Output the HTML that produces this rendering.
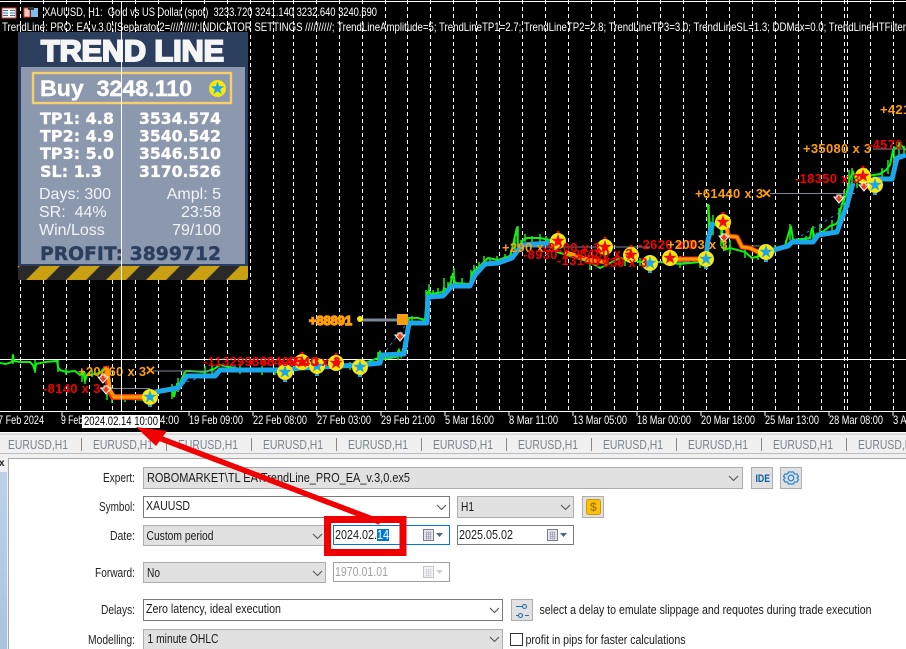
<!DOCTYPE html>
<html><head><meta charset="utf-8"><title>Trend Line</title>
<style>
html,body{margin:0;padding:0;background:#000;width:906px;height:649px;overflow:hidden}
svg{display:block}
text{font-family:"Liberation Sans",sans-serif;white-space:pre}
.hd{font-size:12px;fill:#fff}
.ax{font-size:12px;fill:#fff}
.tab{font-size:12.500px;fill:#77838f}
.ui{font-size:12.500px;fill:#1a1a1a}
.lb{font-size:12.500px;fill:#222}
.or{font-size:13px;font-weight:bold;fill:#ff9f0a;letter-spacing:.3px}
.rd{font-size:13px;font-weight:bold;fill:#f40000;letter-spacing:.3px}
.p1{font-family:"DejaVu Sans",sans-serif;font-weight:bold;font-size:16px;fill:#fff;stroke:#fff;stroke-width:.3}
.p2{font-size:16px;fill:#f2f4f8}
</style></head><body>
<svg width="906" height="649" viewBox="0 0 906 649" xmlns="http://www.w3.org/2000/svg">
<defs>
<polygon id="st" points="0,-7 1.65,-2.27 6.66,-2.16 2.66,.87 4.11,5.66 0,2.8 -4.11,5.66 -2.66,.87 -6.66,-2.16 -1.65,-2.27"/>
<g id="bs"><circle r="8" fill="#f6e80c"/><rect x="-2" y="8" width="4" height="2" fill="#1ca7ec"/><use href="#st" fill="#1ca7ec"/></g>
<g id="rs"><rect x="-1.500" y="-10" width="3" height="3" fill="#f00"/><circle r="8" fill="#f6e80c"/><use href="#st" fill="#f00b0b"/></g>
<polygon id="da" points="-5,-3 -2,-3 -2,-5 2,-5 2,-3 5,-3 0,3" fill="#e8401c" stroke="#fff" stroke-width="1"/>
<pattern id="hz" width="40" height="14" patternUnits="userSpaceOnUse" x="6" y="266"><rect width="40" height="14" fill="#c9a012"/><polygon points="0,14 14,0 34,0 20,14" fill="#2a2a2a"/></pattern>
<g id="cal"><rect x="0" y="0" width="10" height="11" fill="#e8e8ee" stroke="#767c88"/><path d="M2 3h6M2 5h6M2 7h6M2 9h6M3 2v8M5 2v8M7 2v8" stroke="#a0a4b0" stroke-width=".8"/></g>
<path id="chev" d="M0 0l4.500 4.500L9 0" fill="none" stroke="#555" stroke-width="1.100"/>
<linearGradient id="lg" x1="0" y1="0" x2="0" y2="1"><stop offset="0" stop-color="#bcd2ea"/><stop offset="1" stop-color="#a9c4e0"/></linearGradient>
</defs>

<!-- chart -->
<rect width="906" height="432" fill="#000"/>
<path d="M20.500 0V411M43.500 0V411M66.500 0V411M89.500 0V411M112.500 0V411M135.500 0V411M158.500 0V411M181.500 0V411M204.500 0V411M227.500 0V411M250.500 0V411M273.500 0V411M293.500 0V411M316.500 0V411M339.500 0V411M362.500 0V411M385.500 0V411M407.500 0V411M430.500 0V411M453.500 0V411M476.500 0V411M499.500 0V411M522.500 0V411M545.500 0V411M568.500 0V411M591.500 0V411M614.500 0V411M637.500 0V411M660.500 0V411M683.500 0V411M706.500 0V411M729.500 0V411M752.500 0V411M775.500 0V411M798.500 0V411M821.500 0V411M844.500 0V411M847.500 0V411M870.500 0V411M893.500 0V411" stroke="#fff" stroke-width="1" stroke-dasharray="4 3"/>
<rect y="1" width="906" height="1" fill="#fff"/>
<rect y="359" width="906" height="1" fill="#fff"/>

<!-- green price -->
<polyline fill="none" stroke="#12f010" stroke-width="2" points="0,363 6,364 12,362 13,355 14,361 20,362 30,362 33,365 35,371 36,364 45,362 57,361 58,367 60,370 66,372 75,371 80,375 83,372 85,381 87,375 95,374 100,373 104,368 107,378 110,393 113,399 130,399 150,400 160,392 172,388 174,397 177,384 180,383 183,376 186,371 190,371 205,372 214,369 220,365 230,367 250,371 265,369 280,373 300,366 330,367 360,365 378,358 380,352 384,359 396,357 399,350 401,356 404,346 407,330 409,318 418,318 425,320 427,293 429,291 431,294 443,292 444,288 447,290 451,282 453,273 455,283 470,284 472,273 475,270 480,266 484,262 488,258 498,260 510,256 513,245 517,227 518,250 523,240 527,238 540,238 550,240 557,252 570,256 590,262 600,268 620,258 640,262 660,262 680,264 700,262 706,260 709,230 708,204 710,228 714,224 722,230 724,250 730,248 745,252 752,258 760,256 770,252 780,248 785,246 789,232 791,226 793,240 810,238 812,228 815,238 830,226 836,224 838,222 840,212 843,200 846,196 850,178 853,172 856,180 862,172 868,176 880,174 886,170 890,165 893,150 896,148 900,144 906,150"/>
<path fill="none" stroke="#12f010" stroke-width="1.500" d="M13 354v10M35 360v13M58 360v12M66 368v7M82 370v12M85 372v12M92 370v7M107 375v25M112 395v8M125 396v6M172 384v15M178 378v14M184 372v12M205 366v10M212 364v10M240 364v10M262 366v9M275 368v7M350 362v8M378 352v10M398 350v10M404 342v14M412 316v8M426 290v32M429 284v20M433 290v6M438 288v8M444 278v16M448 282v8M451 276v12M454 268v18M462 278v6M471 270v14M474 265v12M479 262v10M484 256v10M490 258v8M497 256v8M505 254v8M511 250v10M515 238v16M518 226v22M521 240v8M525 234v8M532 236v7M540 234v8M546 236v7M590 258v12M605 254v12M625 256v10M640 258v8M680 256v12M700 256v12M709 205v35M713 215v20M721 226v20M730 240v14M745 246v12M758 250v10M775 245v8M786 240v8M790 224v16M806 236v6M813 226v14M820 224v10M832 220v12M839 208v18M844 190v22M849 170v28M852 168v20M857 174v14M866 168v12M882 168v10M888 160v14M894 146v20M899 142v14M904 146v10"/>

<!-- connector lines -->
<g stroke="#7b8696" fill="none">
<path d="M153 371H262M100 388.500H150"/>
<path d="M360 320H400" stroke-width="3"/>
<path d="M770 193.500H855M530 247H650M648 262H690M745 246H770M873 149H906"/>
</g>
<path d="M405 326L385 352M783 247L850 206M236 366L186 382" stroke="#2f7fc4" stroke-dasharray="3 4" fill="none"/>

<!-- blue segments -->
<g fill="none" stroke="#1ca7ec" stroke-width="5" stroke-linejoin="round">
<polyline points="155,392 178,388 187,376 215,376 220,370 285,370 300,368 360,365 380,363 382,355 404,354 407,335 409,323 427,323 428,297 443,296 452,286 470,286 475,275 485,264 498,263 512,258 522,245 550,243"/>
<polyline points="706,259 708,240 713,222"/>
<polyline points="766,252 788,246 792,242 813,242 818,235 837,232 842,218 847,205 853,183"/>
<polyline points="873,179 892,179 897,158 906,155"/>
</g>
<g fill="none" stroke-linejoin="round">
<polyline points="106,366 109,390 113,397 146,397" stroke="#f82808" stroke-width="6"/>
<polyline points="107,368 110,390 114,397 146,397" stroke="#ff9a00" stroke-width="3.500"/>
<polyline points="565,252 590,260 605,262" stroke="#ff9a00" stroke-width="4"/>
<polyline points="672,259 702,259" stroke="#f82808" stroke-width="5"/>
<polyline points="672,259 702,259" stroke="#ff9a00" stroke-width="3"/>
<polyline points="727,228 728,236 737,237 742,247 750,248 758,252" stroke="#f82808" stroke-width="5"/>
<polyline points="727,228 728,236 737,237 742,247 750,248 758,252" stroke="#ff9a00" stroke-width="3"/>
</g>

<!-- labels -->
<text class="or" x="78" y="376">+20460 x 3</text>
<text class="rd" x="43" y="393">-8140 x 3</text>
<text class="or" x="145" y="375">✕</text>
<use href="#rs" x="302" y="362"/><use href="#rs" x="336" y="363"/>
<use href="#bs" x="285" y="372"/><use href="#bs" x="317" y="366"/><use href="#bs" x="360" y="367"/>
<use href="#bs" x="150" y="397"/>
<text class="rd" x="203" y="366">-11329 x 3</text>
<text class="rd" x="240" y="366">-9360 x 3</text>
<text class="rd" x="262" y="366">-8400 x 3</text>
<text class="rd" x="283" y="366">-6540 x 3</text>
<text x="309" y="325" textLength="43" lengthAdjust="spacingAndGlyphs" style="font-size:13px;font-weight:bold;fill:#ff9f0a;stroke:#ff9f0a;stroke-width:1.400">+88891</text>
<circle cx="360" cy="319" r="3" fill="#f6e80c"/>
<rect x="397" y="314" width="11" height="11" fill="#f59c10"/>
<use href="#da" x="400" y="338"/><use href="#da" x="103" y="380"/><use href="#da" x="106" y="391"/>

<use href="#rs" x="558" y="241"/><use href="#rs" x="605" y="247"/><use href="#rs" x="631" y="255"/><use href="#rs" x="670" y="258"/><use href="#rs" x="723" y="222"/><use href="#rs" x="863" y="176"/>
<use href="#bs" x="650" y="263"/><use href="#bs" x="706" y="259"/><use href="#bs" x="766" y="252"/><use href="#bs" x="875" y="185"/>
<use href="#da" x="724" y="239"/><use href="#da" x="839" y="200"/><use href="#da" x="864" y="188"/>

<text class="or" x="502" y="252">+290 x 3</text>
<text class="rd" x="543" y="252">-9200 x 3</text>
<text class="rd" x="523" y="259">-8930 x 3</text>
<text class="rd" x="557" y="265">-13140 x 3</text>
<text class="rd" x="575" y="258">-8480 x 3</text>
<text class="rd" x="590" y="267">-7930 x 3</text>
<text class="rd" x="638" y="249">-2620 x 3</text>
<text class="or" x="667" y="249">+2003 x 3</text>
<text class="or" x="695" y="198">+61440 x 3</text>
<text class="or" x="761" y="198">✕</text>
<text class="or" x="803" y="153">+35080 x 3</text>
<text class="rd" x="868" y="149">-4570 x 3</text>
<text class="rd" x="795" y="183">-18350 x 3</text>
<text class="or" x="880" y="114">+421</text>

<!-- header -->
<rect x="2" y="8" width="14" height="10" fill="#fff" stroke="#d9382a"/><path d="M3 10.500h5M3 13h5M3 15.500h5M10 10.500h5M10 13h5M10 15.500h5" stroke="#2f6fc0"/>
<rect x="24" y="8" width="6" height="9" fill="#f7c8c0" stroke="#e04030"/><rect x="31" y="8" width="7" height="9" fill="#80bce8"/><rect x="28" y="7" width="6" height="3" fill="#333"/>
<text class="hd" x="44" y="16" textLength="333" lengthAdjust="spacingAndGlyphs">XAUUSD, H1:  Gold vs US Dollar (spot)  3233.720 3241.140 3232.640 3240.690</text>
<text class="hd" x="2" y="31" textLength="904" lengthAdjust="spacingAndGlyphs">TrendLine: PRO: EA v.3,0;[Separator2=//////////;INDICATOR SETTINGS //////////; TrendLineAmplitude=5; TrendLineTP1=2.7; TrendLineTP2=2.8; TrendLineTP3=3.0; TrendLineSL=1.3; DDMax=0.0; TrendLineHTFilter</text>

<!-- panel -->
<rect x="18" y="32" width="230" height="234" fill="#2c3e5e"/>
<rect x="21" y="67" width="224" height="197" fill="#8c98ae"/>
<rect x="18" y="266" width="230" height="14" fill="url(#hz)"/>
<text x="41" y="61" textLength="183" lengthAdjust="spacingAndGlyphs" style="font-size:30px;font-weight:bold;fill:#f5f5f5;stroke:#f5f5f5;stroke-width:2">TREND LINE</text>
<rect x="33" y="73" width="198" height="30" fill="none" stroke="#f8cf68" stroke-width="2.400"/>
<text x="40" y="96" textLength="152" lengthAdjust="spacingAndGlyphs" style="font-size:22px;font-weight:bold;fill:#fff;stroke:#fff;stroke-width:.4">Buy  3248.110</text>
<g transform="translate(217.500,88.500)"><circle r="8.500" fill="#f6e80c"/><use href="#st" fill="#1ca7ec"/></g>
<text class="p1" x="40" y="124" textLength="74" lengthAdjust="spacingAndGlyphs">TP1: 4.8</text><text class="p1" x="139" y="124" textLength="82" lengthAdjust="spacingAndGlyphs">3534.574</text>
<text class="p1" x="40" y="141.500" textLength="74" lengthAdjust="spacingAndGlyphs">TP2: 4.9</text><text class="p1" x="139" y="141.500" textLength="82" lengthAdjust="spacingAndGlyphs">3540.542</text>
<text class="p1" x="40" y="159" textLength="74" lengthAdjust="spacingAndGlyphs">TP3: 5.0</text><text class="p1" x="139" y="159" textLength="82" lengthAdjust="spacingAndGlyphs">3546.510</text>
<text class="p1" x="40" y="177" textLength="62" lengthAdjust="spacingAndGlyphs">SL: 1.3</text><text class="p1" x="139" y="177" textLength="82" lengthAdjust="spacingAndGlyphs">3170.526</text>
<text class="p2" x="39" y="199">Days: 300</text><text class="p2" x="221" y="199" text-anchor="end">Ampl: 5</text>
<text class="p2" x="39" y="217">SR:  44%</text><text class="p2" x="221" y="217" text-anchor="end">23:58</text>
<text class="p2" x="39" y="235">Win/Loss</text><text class="p2" x="221" y="235" text-anchor="end">79/100</text>
<text x="40" y="260" textLength="181" lengthAdjust="spacingAndGlyphs" style="font-family:'DejaVu Sans',sans-serif;font-size:19px;font-weight:bold;fill:#2c3e5e;stroke:#2c3e5e;stroke-width:.4">PROFIT: 3899712</text>

<!-- crosshair -->
<rect x="121" y="2" width="1" height="409" fill="#fff"/>

<!-- time axis -->
<rect y="411" width="906" height="1" fill="#fff"/>
<path d="M62 411v5M189 411v5M253 411v5M317 411v5M381 411v5M445 411v5M509 411v5M573 411v5M637 411v5M701 411v5M765 411v5M829 411v5M893 411v5" stroke="#fff"/>
<g>
<text class="ax" x="-2" y="424" textLength="46" lengthAdjust="spacingAndGlyphs">7 Feb 2024</text>
<text class="ax" x="61" y="424" textLength="22" lengthAdjust="spacingAndGlyphs">9 Feb</text>
<text class="ax" x="160" y="424" textLength="19" lengthAdjust="spacingAndGlyphs">4:00</text>
<text class="ax" x="189" y="424" textLength="54" lengthAdjust="spacingAndGlyphs">19 Feb 09:00</text>
<text class="ax" x="253" y="424" textLength="54" lengthAdjust="spacingAndGlyphs">22 Feb 08:00</text>
<text class="ax" x="317" y="424" textLength="54" lengthAdjust="spacingAndGlyphs">27 Feb 03:00</text>
<text class="ax" x="381" y="424" textLength="54" lengthAdjust="spacingAndGlyphs">29 Feb 21:00</text>
<text class="ax" x="445" y="424" textLength="49" lengthAdjust="spacingAndGlyphs">5 Mar 16:00</text>
<text class="ax" x="509" y="424" textLength="49" lengthAdjust="spacingAndGlyphs">8 Mar 11:00</text>
<text class="ax" x="573" y="424" textLength="54" lengthAdjust="spacingAndGlyphs">13 Mar 05:00</text>
<text class="ax" x="637" y="424" textLength="54" lengthAdjust="spacingAndGlyphs">18 Mar 00:00</text>
<text class="ax" x="701" y="424" textLength="54" lengthAdjust="spacingAndGlyphs">20 Mar 18:00</text>
<text class="ax" x="765" y="424" textLength="54" lengthAdjust="spacingAndGlyphs">25 Mar 13:00</text>
<text class="ax" x="829" y="424" textLength="54" lengthAdjust="spacingAndGlyphs">28 Mar 08:00</text>
<text class="ax" x="893" y="424" textLength="22" lengthAdjust="spacingAndGlyphs">3 Apr</text>
</g>
<rect x="82" y="415" width="78" height="13" fill="#fff"/>
<text x="84" y="425" textLength="74" lengthAdjust="spacingAndGlyphs" style="font-size:12px;fill:#000">2024.02.14 10:00</text>

<!-- tabs -->
<rect y="432" width="906" height="217" fill="#f0f0f0"/>
<rect y="432" width="906" height="2" fill="#fff"/>
<rect y="433.500" width="906" height="1" fill="#c0c0c0"/>
<rect y="453" width="906" height="1" fill="#bdbdbd"/>
<g>
<text class="tab" x="8" y="449" textLength="60" lengthAdjust="spacingAndGlyphs">EURUSD,H1</text><text class="tab" x="93" y="449" textLength="60" lengthAdjust="spacingAndGlyphs">EURUSD,H1</text><text class="tab" x="178" y="449" textLength="60" lengthAdjust="spacingAndGlyphs">EURUSD,H1</text><text class="tab" x="263" y="449" textLength="60" lengthAdjust="spacingAndGlyphs">EURUSD,H1</text><text class="tab" x="348" y="449" textLength="60" lengthAdjust="spacingAndGlyphs">EURUSD,H1</text><text class="tab" x="433" y="449" textLength="60" lengthAdjust="spacingAndGlyphs">EURUSD,H1</text><text class="tab" x="518" y="449" textLength="60" lengthAdjust="spacingAndGlyphs">EURUSD,H1</text><text class="tab" x="603" y="449" textLength="60" lengthAdjust="spacingAndGlyphs">EURUSD,H1</text><text class="tab" x="688" y="449" textLength="60" lengthAdjust="spacingAndGlyphs">EURUSD,H1</text><text class="tab" x="773" y="449" textLength="60" lengthAdjust="spacingAndGlyphs">EURUSD,H1</text><text class="tab" x="858" y="449" textLength="60" lengthAdjust="spacingAndGlyphs">EURUSD,H1</text>
</g>
<path d="M81.500 438V451M166.500 438V451M251.500 438V451M336.500 438V451M421.500 438V451M506.500 438V451M591.500 438V451M676.500 438V451M761.500 438V451M846.500 438V451" stroke="#8a8a8a"/>

<!-- left strip -->
<rect x="0" y="472" width="7" height="177" fill="url(#lg)"/>
<text x="-1" y="466" style="font-size:10px;font-weight:bold;fill:#222">x</text>

<!-- form -->
<rect x="8" y="458" width="898" height="191" fill="#fff"/>
<path d="M8.500 649V458.500H906" fill="none" stroke="#a8a8a8"/>

<text class="lb" x="103" y="482" textLength="32" lengthAdjust="spacingAndGlyphs">Expert:</text>
<text class="lb" x="99" y="511" textLength="36" lengthAdjust="spacingAndGlyphs">Symbol:</text>
<text class="lb" x="110" y="540" textLength="25" lengthAdjust="spacingAndGlyphs">Date:</text>
<text class="lb" x="95" y="577" textLength="40" lengthAdjust="spacingAndGlyphs">Forward:</text>
<text class="lb" x="101" y="614" textLength="34" lengthAdjust="spacingAndGlyphs">Delays:</text>
<text class="lb" x="88" y="644" textLength="47" lengthAdjust="spacingAndGlyphs">Modelling:</text>

<g fill="#e1e1e1" stroke="#adadad">
<rect x="143.500" y="467.500" width="599" height="21"/>
<rect x="457.500" y="496.500" width="116" height="21"/>
<rect x="143.500" y="525.500" width="182" height="20"/>
<rect x="143.500" y="562.500" width="182" height="20"/>
<rect x="143.500" y="629.500" width="359" height="22"/>
<rect x="751.500" y="467.500" width="21" height="21"/>
<rect x="780.500" y="467.500" width="21" height="21"/>
<rect x="582.500" y="496.500" width="21" height="21"/>
<rect x="511.500" y="599.500" width="21" height="21"/>
</g>
<g fill="#fff" stroke="#7a7a7a">
<rect x="143.500" y="496.500" width="306" height="21"/>
<rect x="143.500" y="599.500" width="359" height="21"/>
<rect x="457.500" y="525.500" width="116" height="19"/>
</g>
<rect x="333.500" y="525.500" width="116" height="19" fill="#fff" stroke="#0078d7"/>
<rect x="333.500" y="562.500" width="116" height="19" fill="#fff" stroke="#a0a0a0"/>

<text class="ui" x="147" y="482" textLength="263" lengthAdjust="spacingAndGlyphs">ROBOMARKET\TL EA\TrendLine_PRO_EA_v.3,0.ex5</text>
<text class="ui" x="146" y="510" textLength="44" lengthAdjust="spacingAndGlyphs">XAUUSD</text>
<text class="ui" x="461" y="511" textLength="13" lengthAdjust="spacingAndGlyphs">H1</text>
<text class="ui" x="146.500" y="540" textLength="67" lengthAdjust="spacingAndGlyphs">Custom period</text>
<text class="ui" x="335" y="539" textLength="42" lengthAdjust="spacingAndGlyphs">2024.02.</text>
<rect x="377" y="529" width="12" height="12" fill="#0078d7"/>
<text class="ui" x="377" y="539" textLength="12" lengthAdjust="spacingAndGlyphs" style="fill:#fff">14</text>
<text class="ui" x="459" y="539" textLength="54" lengthAdjust="spacingAndGlyphs">2025.05.02</text>
<text class="ui" x="147" y="577" textLength="13" lengthAdjust="spacingAndGlyphs">No</text>
<text class="ui" x="335" y="576" textLength="53" lengthAdjust="spacingAndGlyphs" style="fill:#a0a0a0">1970.01.01</text>
<text class="ui" x="146" y="613" textLength="135" lengthAdjust="spacingAndGlyphs">Zero latency, ideal execution</text>
<text class="ui" x="147.500" y="643" textLength="71" lengthAdjust="spacingAndGlyphs">1 minute OHLC</text>
<text class="ui" x="539.500" y="614" textLength="332" lengthAdjust="spacingAndGlyphs">select a delay to emulate slippage and requotes during trade execution</text>
<text class="ui" x="525.500" y="644" textLength="160" lengthAdjust="spacingAndGlyphs">profit in pips for faster calculations</text>
<rect x="510.500" y="633.500" width="12" height="12" fill="#fff" stroke="#333"/>

<g>
<use href="#chev" x="729" y="476"/>
<use href="#chev" x="437" y="505"/>
<use href="#chev" x="561" y="505"/>
<use href="#chev" x="313" y="534"/>
<use href="#chev" x="313" y="571"/>
<use href="#chev" x="490" y="608"/>
<use href="#chev" x="490" y="637"/>
</g>
<use href="#cal" x="423.500" y="529.500"/><path d="M436 533h7l-3.500 4z" fill="#4a6390"/>
<use href="#cal" x="547.500" y="529.500"/><path d="M560 533h7l-3.500 4z" fill="#4a6390"/>
<g opacity=".45"><use href="#cal" x="423.500" y="566.500"/><path d="M436 570h7l-3.500 4z" fill="#999"/></g>

<text x="755.500" y="482" textLength="14.500" lengthAdjust="spacingAndGlyphs" style="font-size:11px;font-weight:bold;fill:#0a5c9e">IDE</text>
<g transform="translate(791,478)" fill="none" stroke="#2f86d0" stroke-width="1.300"><circle r="2.800"/><path d="M-2.500 -6h5l1 2 2.500 0 1.500 2.500 -1.500 1.500 1.500 1.500 -1.500 2.500 -2.500 0 -1 2h-5l-1 -2 -2.500 0 -1.500 -2.500 1.500 -1.500 -1.500 -1.500 1.500 -2.500 2.500 0z"/></g>
<rect x="586.500" y="499.500" width="14" height="15" rx="2" fill="#fdc008" stroke="#c99a06"/>
<text x="590" y="511" style="font-size:12px;font-weight:bold;fill:#a87a10">$</text>
<g fill="none" stroke="#1e6fb0" stroke-width="1.100"><path d="M516 606.500h6M516 615.500h2M525 615.500h4"/><circle cx="524.500" cy="606.500" r="2"/><circle cx="520.500" cy="615.500" r="2"/></g>

<!-- red annotation -->
<path d="M146 433L380 522" stroke="#f00000" stroke-width="5.500" fill="none"/>
<polygon points="136,427 167,431 156,446" fill="#f00000"/>
<rect x="327.500" y="519.500" width="75.500" height="33" fill="none" stroke="#f00000" stroke-width="7"/>
</svg>
</body></html>
